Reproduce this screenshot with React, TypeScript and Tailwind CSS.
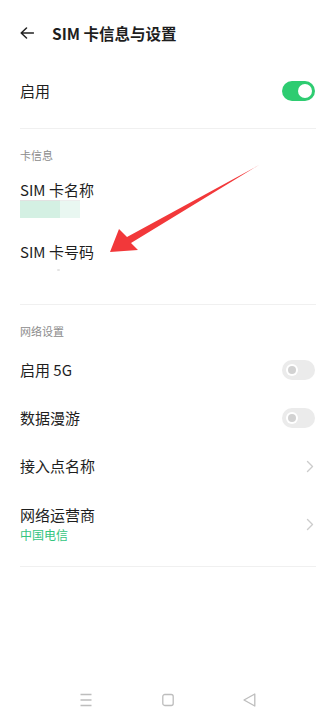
import React from "react";

function Toggle({ on }: { on: boolean }) {
  if (on) {
    return (
      <div className="w-[33px] h-[20px] rounded-full bg-[#2ecc71] flex items-center justify-end pr-[3px]">
        <div className="w-[14px] h-[14px] rounded-full bg-white" />
      </div>
    );
  }
  return (
    <div className="w-[33px] h-[20px] rounded-full bg-[#ebebeb] flex items-center pl-[4px]">
      <div className="w-[12px] h-[12px] rounded-full bg-white flex items-center justify-center">
        <div className="w-[8px] h-[8px] rounded-full bg-[#d2d2d2]" />
      </div>
    </div>
  );
}

function Chevron() {
  return (
    <svg width="8" height="13" viewBox="0 0 8 13" className="mr-[1px]">
      <path d="M1.5 1.5 L6.5 6.5 L1.5 11.5" fill="none" stroke="#cccccc" strokeWidth="1.4" strokeLinecap="round" strokeLinejoin="round" />
    </svg>
  );
}

export default function App() {
  return (
    <div className="relative w-[336px] h-[720px] bg-white overflow-hidden font-['Noto_Sans_CJK_SC',sans-serif] text-[#1e1e1e]">
      {/* Header */}
      <div className="h-[66px] flex items-center px-[20px]">
        <svg width="14" height="12" viewBox="0 0 14 12">
          <path d="M13.5 6 H1.2 M6.5 1 L1.2 6 L6.5 11" fill="none" stroke="#222" strokeWidth="1.5" strokeLinecap="round" strokeLinejoin="round" />
        </svg>
        <div className="ml-[18px] text-[15.5px] leading-[20px] font-bold">SIM 卡信息与设置</div>
      </div>

      {/* Enable row */}
      <div className="h-[50px] flex items-center justify-between pl-[20px] pr-[21px]">
        <div className="text-[15px] leading-[20px]">启用</div>
        <Toggle on={true} />
      </div>
      <div className="mt-[12px] mx-[20px] h-px bg-[#f0f0f0]" />

      {/* Card info */}
      <div className="mt-[18px] px-[20px] text-[11px] leading-[16px] text-[#8c8c8c]">卡信息</div>
      <div className="mt-[17px] px-[20px] text-[15px] leading-[20px]">SIM 卡名称</div>
      <div className="px-[20px] flex">
        <div className="w-[40px] h-[18px] bg-[#d4f0e3] border-t border-[#e2e2e2]" />
        <div className="w-[20px] h-[18px] bg-[#e9f7f1] border-t border-[#ececec]" />
      </div>
      <div className="mt-[24px] px-[20px] text-[15px] leading-[20px]">SIM 卡号码</div>
      <div className="ml-[57px] mt-[7px] w-[3px] h-[2px] rounded-full bg-[#e4e4e4]" />
      <div className="mt-[33px] mx-[20px] h-px bg-[#f0f0f0]" />

      {/* Network settings */}
      <div className="mt-[18px] px-[20px] text-[11px] leading-[16px] text-[#8c8c8c]">网络设置</div>
      <div className="mt-[7px] h-[48px] flex items-center justify-between pl-[20px] pr-[21px]">
        <div className="text-[15px] leading-[20px]">启用 5G</div>
        <Toggle on={false} />
      </div>
      <div className="h-[48px] flex items-center justify-between pl-[20px] pr-[21px]">
        <div className="text-[15px] leading-[20px]">数据漫游</div>
        <Toggle on={false} />
      </div>
      <div className="h-[48px] flex items-center justify-between pl-[20px] pr-[21px]">
        <div className="text-[15px] leading-[20px]">接入点名称</div>
        <Chevron />
      </div>
      <div className="pt-[15px] flex items-center justify-between pl-[20px] pr-[21px]">
        <div className="flex flex-col">
          <div className="text-[15px] leading-[20px]">网络运营商</div>
          <div className="mt-[2px] text-[12px] leading-[16px] text-[#34c57f]">中国电信</div>
        </div>
        <Chevron />
      </div>
      <div className="mt-[23px] mx-[20px] h-px bg-[#f0f0f0]" />

      {/* Navigation bar */}
      <div className="absolute left-0 right-0 bottom-[13px] flex items-center">
        <div className="absolute left-[80px]">
          <svg width="12" height="14" viewBox="0 0 12 14">
            <path d="M0.5 1.5 H11.5 M0.5 7 H11.5 M0.5 12.5 H11.5" stroke="#bdbdbd" strokeWidth="1.3" />
          </svg>
        </div>
        <div className="absolute left-[162px]">
          <svg width="12" height="14" viewBox="0 0 12 14">
            <rect x="0.8" y="1.5" width="10.4" height="11" rx="2" fill="none" stroke="#bdbdbd" strokeWidth="1.3" />
          </svg>
        </div>
        <div className="absolute left-[243px]">
          <svg width="13" height="14" viewBox="0 0 13 14">
            <path d="M1 7 L11.8 1 V13 Z" fill="none" stroke="#bdbdbd" strokeWidth="1.3" strokeLinejoin="round" />
          </svg>
        </div>
        <div className="h-[14px]" />
      </div>

      {/* Red annotation arrow */}
      <svg className="absolute left-0 top-0 pointer-events-none" width="336" height="720" viewBox="0 0 336 720">
        <polygon points="110,252 119,229 127,237 259,165 131,243 138,250" fill="#f2383a" />
      </svg>
    </div>
  );
}
